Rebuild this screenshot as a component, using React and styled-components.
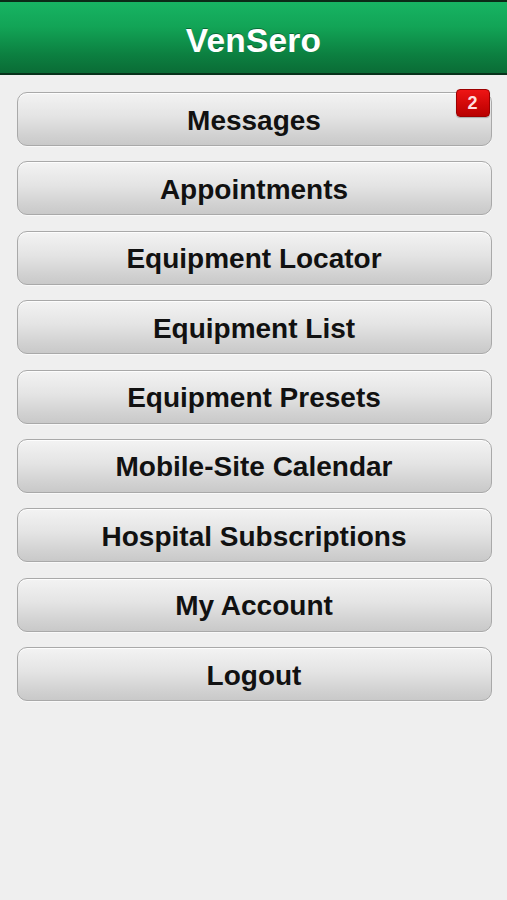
import React from "react";
import styled, { createGlobalStyle } from "styled-components";

const Global = createGlobalStyle`
  html, body { margin: 0; padding: 0; background: #efefef; }
  body { font-family: "Liberation Sans", Arial, Helvetica, sans-serif; }
  * { box-sizing: border-box; }
`;

const Page = styled.div`
  width: 507px;
  min-height: 900px;
  background: #efefef;
  display: flex;
  flex-direction: column;
`;

const Header = styled.header`
  height: 75px;
  border-top: 2px solid #0b2a17;
  border-bottom: 2px solid #07321b;
  background: linear-gradient(to bottom, #17b463 0%, #12a456 35%, #0c7f40 75%, #0a6c36 100%);
  display: flex;
  align-items: center;
  justify-content: center;
`;

const Title = styled.h1`
  margin: 0;
  color: #ffffff;
  font-size: 33.5px;
  font-weight: bold;
  letter-spacing: 0.2px;
  text-shadow: 0 -1px 0 rgba(0, 0, 0, 0.35);
  transform: translateY(2.5px);
`;

const Menu = styled.nav`
  display: flex;
  flex-direction: column;
  gap: 15.4px;
  padding: 17px 15.5px 0 16.5px;
`;

const MenuButton = styled.button`
  position: relative;
  height: 54px;
  width: 100%;
  border: 1px solid #a9a9a9;
  border-radius: 10px;
  background: linear-gradient(to bottom, #f3f3f3 0%, #e4e4e4 45%, #d2d2d2 80%, #c9c9c9 100%);
  box-shadow: inset 0 1px 0 rgba(255, 255, 255, 0.8), 0 1px 0 rgba(255, 255, 255, 0.6);
  font-family: "Liberation Sans", Arial, Helvetica, sans-serif;
  font-weight: bold;
  font-size: 28px;
  color: #111111;
  padding: 3px 0 0;
  display: flex;
  align-items: center;
  justify-content: center;
  cursor: pointer;
`;

const Badge = styled.span`
  position: absolute;
  top: -4px;
  right: 1px;
  width: 34px;
  height: 28px;
  border-radius: 4px;
  background: linear-gradient(to bottom, #ee1515 0%, #d10808 55%, #b80000 100%);
  border: 1px solid #9c0000;
  color: #ffdede;
  font-size: 18px;
  font-weight: bold;
  display: flex;
  align-items: center;
  justify-content: center;
  box-shadow: 0 1px 1px rgba(0, 0, 0, 0.25);
`;

const items = [
  { label: "Messages", badge: 2 },
  { label: "Appointments" },
  { label: "Equipment Locator" },
  { label: "Equipment List" },
  { label: "Equipment Presets" },
  { label: "Mobile-Site Calendar" },
  { label: "Hospital Subscriptions" },
  { label: "My Account" },
  { label: "Logout" },
];

export default function App() {
  return (
    <Page>
      <Global />
      <Header>
        <Title>VenSero</Title>
      </Header>
      <Menu>
        {items.map((it) => (
          <MenuButton key={it.label}>
            {it.label}
            {it.badge ? <Badge>{it.badge}</Badge> : null}
          </MenuButton>
        ))}
      </Menu>
    </Page>
  );
}
